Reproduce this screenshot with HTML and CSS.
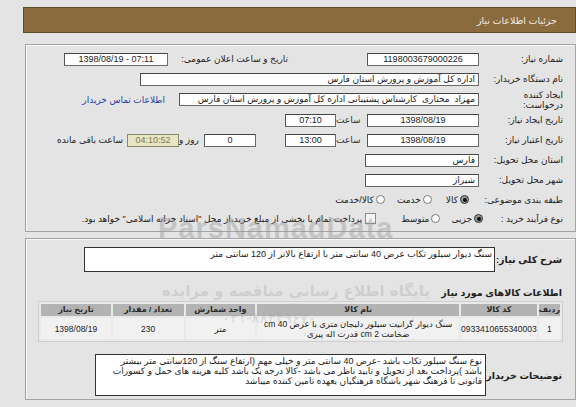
FILE: index.html
```html
<!DOCTYPE html>
<html lang="fa" dir="rtl">
<head>
<meta charset="utf-8">
<title>جزئیات اطلاعات نیاز</title>
<link rel="stylesheet" href="styles.css">
</head>
<body>
<div class="page">
  <div class="titlebar"><span class="title">جزئیات اطلاعات نیاز</span></div>

  <div class="panel p1">
    <div class="row r1">
      <div class="lbl">شماره نیاز:</div>
      <div class="box w112 c">1198003679000226</div>
      <div class="lbl2">تاریخ و ساعت اعلان عمومی:</div>
      <div class="box w104 c ltr" dir="ltr">1398/08/19 - 07:11</div>
    </div>
    <div class="row r2">
      <div class="lbl">نام دستگاه خریدار:</div>
      <div class="box w337">اداره کل آموزش و پرورش استان فارس</div>
    </div>
    <div class="row r3">
      <div class="lbl two">ایجاد کننده<br>درخواست:</div>
      <div class="box w298">مهزاد&nbsp; مختاری&nbsp; کارشناس پشتیبانی اداره کل آموزش و پرورش استان فارس</div>
      <div class="linkwrap"><a class="link" href="#">اطلاعات تماس خریدار</a></div>
    </div>
    <div class="row r4">
      <div class="lbl">تاریخ ایجاد نیاز:</div>
      <div class="box w112 c">1398/08/19</div>
      <div class="sa">ساعت</div>
      <div class="box w51 c">07:10</div>
    </div>
    <div class="row r5">
      <div class="lbl">تاریخ اعتبار نیاز:</div>
      <div class="box w112 c">1398/08/19</div>
      <div class="sa">ساعت</div>
      <div class="box w51 c">13:00</div>
      <div class="box w52 c day">0</div>
      <div class="rz">روز و</div>
      <div class="box w52 c remain">04:10:52</div>
      <div class="rem">ساعت باقی مانده</div>
    </div>
    <div class="row r6">
      <div class="lbl">استان محل تحویل:</div>
      <div class="box w112">فارس</div>
    </div>
    <div class="row r7">
      <div class="lbl">شهر محل تحویل:</div>
      <div class="box w112">شیراز</div>
    </div>
    <div class="row r8">
      <div class="lbl">طبقه بندی موضوعی:</div>
      <span class="radio on m8a"></span><span class="opt">کالا</span>
      <span class="radio m8b"></span><span class="opt">خدمت</span>
      <span class="radio m8c"></span><span class="opt">کالا/خدمت</span>
    </div>
    <div class="row r9">
      <div class="lbl">نوع فرآیند خرید :</div>
      <span class="radio on m9a"></span><span class="opt">جزیی</span>
      <span class="radio m9b"></span><span class="opt">متوسط</span>
      <span class="check"></span><span class="opt long">پرداخت تمام یا بخشی از مبلغ خرید،از محل "اسناد خزانه اسلامی" خواهد بود.</span>
    </div>
  </div>

  <div class="panel p2">
    <div class="row desc">
      <div class="blbl w65">شرح کلی نیاز:</div>
      <div class="tbox t1">سنگ دیوار سیلور تکاب عرض 40 سانتی متر با ارتفاع بالاتر از 120 سانتی متر</div>
    </div>
    <div class="sect">اطلاعات کالاهای مورد نیاز</div>
    <table class="items">
      <thead>
        <tr>
          <th class="c1">ردیف</th>
          <th class="c2">کد کالا</th>
          <th class="c3">نام کالا</th>
          <th class="c4">واحد شمارش</th>
          <th class="c5">تعداد / مقدار</th>
          <th class="c6">تاریخ نیاز</th>
        </tr>
      </thead>
      <tbody>
        <tr>
          <td>1</td>
          <td>0933410655340003</td>
          <td class="name">سنگ دیوار گرانیت سیلور دلیجان متری با عرض 40 cm<br>ضخامت 2 cm قدرت اله پیری</td>
          <td>متر</td>
          <td>230</td>
          <td>1398/08/19</td>
        </tr>
      </tbody>
    </table>
    <div class="row notes">
      <div class="blbl w73">توضیحات خریدار:</div>
      <div class="tbox t2">نوع سنگ سیلور تکاب باشد -عرض 40 سانتی متر و خیلی مهم (ارتفاع سنگ از 120سانتی متر بیشتر<br>باشد )پرداخت بعد از تحویل و تایید ناظر می باشد -کالا درجه یک باشد کلیه هزینه های حمل و کسورات<br>قانونی تا فرهنگ شهر باشگاه فرهنگیان بعهده تامین کننده میباشد</div>
    </div>
  </div>

  <div class="wm wm1" dir="ltr">ParsNamadData</div>
  <div class="wm wm2">پایگاه اطلاع رسانی مناقصه و مزایده</div>
  <div class="wm wm3" dir="ltr">۰۲۱-۸۸۳۴۹۶۷۰</div>
</div>
</body>
</html>
```

FILE: styles.css
```css
html, body {
  margin: 0;
  padding: 0;
  background: #e4e4e4;
}
body {
  font-family: "Liberation Sans", "DejaVu Sans", sans-serif;
  font-size: 9px;
  color: #222;
}
.page {
  position: relative;
  width: 576px;
  height: 407px;
  padding-top: 7px;
  box-sizing: border-box;
  overflow: hidden;
}
.titlebar {
  margin-left: 7px;
  width: 553px;
  height: 26px;
  box-sizing: border-box;
  background: #8b6b3e;
  border: 1px solid #5e4b30;
  color: #f2ede4;
  display: flex;
  align-items: center;
  padding-right: 18px;
  font-size: 9.5px;
}
.panel {
  margin-left: 10px;
  width: 551px;
  box-sizing: border-box;
  border: 1px solid #a4a4a4;
  box-shadow: inset 1px 1px 0 #f8f8f8;
  background: #e4e4e4;
}
.p1 {
  margin-top: 11px;
  height: 188px;
  padding: 4px 12px 0 0;
}
.p2 {
  margin-top: 6px;
  height: 162px;
  padding: 8px 13px 0 0;
}
.row {
  display: flex;
  align-items: center;
  height: 20px;
}
.r3 { height: 21px; }
.r8 { height: 19px; }
.r9 { height: 19px; }
.lbl {
  width: 84px;
  flex: none;
  white-space: nowrap;
}
.lbl.two { line-height: 10.5px; padding-top: 1px; }
.box {
  height: 11px;
  line-height: 11px;
  box-sizing: content-box;
  background: #fff;
  border: 1px solid #6a6a6a;
  border-top-color: #444;
  border-left-color: #555;
  padding: 0 3px;
  white-space: nowrap;
  overflow: hidden;
  flex: none;
}
.box.c { text-align: center; padding: 0; }
.ltr { direction: ltr; unicode-bidi: isolate; }
.w112 { width: 106px; }
.box.c.w112 { width: 110px; }
.w104 { width: 102px; }
.w337 { width: 331px; }
.w298 { width: 292px; }
.w51 { width: 49px; }
.w52 { width: 50px; }
.lbl2 {
  width: 120px;
  margin-right: 79px;
  flex: none;
  white-space: nowrap;
}
.linkwrap {
  margin-right: 14px;
  white-space: nowrap;
}
.link {
  color: #2443a3;
  text-decoration: none;
}
.sa {
  width: 31px;
  text-align: left;
  flex: none;
  white-space: nowrap;
  color: #333;
}
.day { margin-right: 29px; }
.rz {
  width: 25px;
  text-align: left;
  flex: none;
  white-space: nowrap;
}
.remain {
  background: #e8e6c3;
  color: #7b7b58;
  border-color: #8a8a70;
}
.rem {
  margin-right: 4px;
  white-space: nowrap;
}
.radio {
  width: 7px;
  height: 7px;
  border-radius: 50%;
  border: 1px solid #7c7c7c;
  background: #fdfdfd;
  flex: none;
  position: relative;
}
.radio.on {
  border-color: #333;
  background: #9a9a9a;
}
.radio.on::after {
  content: "";
  position: absolute;
  left: 1.5px;
  top: 1.5px;
  width: 4px;
  height: 4px;
  border-radius: 50%;
  background: #000;
}
.check {
  width: 9px;
  height: 9px;
  border: 1px solid #8a8a8a;
  background: #f4f4f4;
  flex: none;
  margin-right: 25px;
}
.opt { white-space: nowrap; margin-right: 2px; }
.long { margin-right: 3px; }
.m8a { margin-right: 10px; }
.m8b { margin-right: 14px; }
.m8c { margin-right: 12px; }
.m9a { margin-right: -4px; }
.m9b { margin-right: 11px; }
.blbl {
  font-weight: bold;
  white-space: nowrap;
  flex: none;
  font-size: 9.5px;
}
.w65 { width: 67px; }
.w73 { width: 76px; }
.tbox {
  background: #fff;
  border: 1px solid #333;
  box-sizing: border-box;
  padding: 1px 2px;
  flex: none;
}
.desc { height: 25px; }
.t1 {
  width: 411px;
  height: 25px;
  white-space: nowrap;
  line-height: 11px;
}
.sect {
  font-weight: bold;
  font-size: 9.5px;
  margin-top: 15px;
  height: 12px;
  line-height: 12px;
}
.items {
  margin-top: 2px;
  margin-right: -1px;
  width: 525px;
  border-collapse: separate;
  border-spacing: 2px;
  background: #e9e9e9;
  border: 1px solid #cfcfcf;
  font-size: 8.5px;
}
.items th {
  background: #b3b3b3;
  color: #2a2a2a;
  font-weight: bold;
  height: 12px;
  padding: 0;
  line-height: 12px;
  font-size: 8px;
}
.items td {
  background: #f1f1f1;
  text-align: center;
  height: 21px;
  padding: 0;
  line-height: 10px;
}
.c1 { width: 20px; }
.c2 { width: 75px; }
.c3 { width: 203px; }
.c4 { width: 70px; }
.c5 { width: 71px; }
.c6 { width: 70px; }
.notes {
  margin-top: 12px;
  height: 42px;
}
.t2 {
  width: 391px;
  height: 42px;
  line-height: 10px;
  padding: 1px 3px;
  white-space: nowrap;
  overflow: hidden;
}
.wm {
  position: absolute;
  pointer-events: none;
  white-space: nowrap;
}
.wm1 {
  left: 158px;
  top: 212px;
  font-family: "Liberation Sans", sans-serif;
  font-weight: bold;
  font-size: 29px;
  letter-spacing: 1px;
  color: rgba(150, 150, 150, 0.42);
}
.wm2 {
  left: 162px;
  top: 282px;
  font-family: "DejaVu Sans", sans-serif;
  font-weight: bold;
  font-size: 15px;
  color: rgba(160, 160, 160, 0.32);
}
.wm3 {
  left: 222px;
  top: 309px;
  font-family: "DejaVu Sans", sans-serif;
  font-size: 15px;
  color: rgba(160, 160, 160, 0.32);
}
```
